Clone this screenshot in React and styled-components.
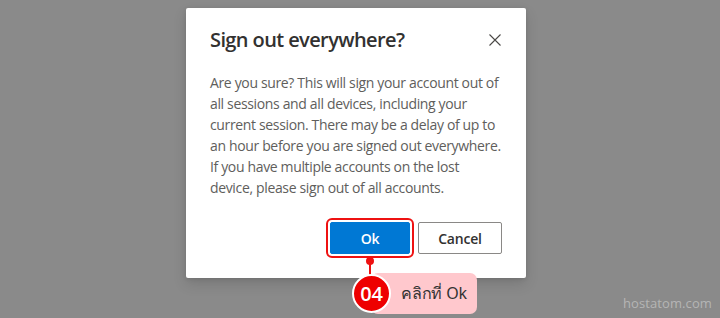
import React from 'react'
import styled, { createGlobalStyle } from "styled-components"

const GlobalStyle = createGlobalStyle`
    html, body {
        margin: 0;
        padding: 0;
        background: #8a8a8a;
    }
    * {
        box-sizing: border-box;
    }
`;

const Page = styled.div`
    position: relative;
    width: 720px;
    height: 318px;
    overflow: hidden;
    display: flex;
    justify-content: center;
    align-items: flex-start;
    padding-top: 8px;
    font-family: "Open Sans", "Noto Sans", sans-serif;
`;

const Dialog = styled.div`
    width: 340px;
    margin-right: 8px;
    background: #ffffff;
    border-radius: 2px;
    padding: 18px 24px 24px;
    box-shadow: 0 6px 14px rgba(0, 0, 0, 0.13), 0 1px 4px rgba(0, 0, 0, 0.1);
`;

const Header = styled.div`
    display: flex;
    align-items: center;
    justify-content: space-between;
`;

const Title = styled.h2`
    margin: 0;
    font-size: 20px;
    line-height: 28px;
    font-weight: 600;
    color: #323130;
    letter-spacing: -0.6px;
`;

const CloseButton = styled.button`
    display: flex;
    align-items: center;
    justify-content: center;
    width: 24px;
    height: 24px;
    margin-right: -5px;
    padding: 0;
    border: none;
    background: none;
    color: #4a4846;
`;

const Body = styled.p`
    margin: 18px 0 0;
    font-size: 14px;
    line-height: 21px;
    color: #605e5c;
    letter-spacing: -0.35px;
`;

const Footer = styled.div`
    display: flex;
    justify-content: flex-end;
    gap: 8px;
    margin-top: 24px;
`;

const Button = styled.button`
    position: relative;
    height: 32px;
    width: ${p => p.$width}px;
    border-radius: 2px;
    font-family: inherit;
    font-size: 14px;
    font-weight: 600;
    letter-spacing: -0.2px;
    border: 1px solid ${p => (p.$primary ? "#0078d4" : "#8a8886")};
    background: ${p => (p.$primary ? "#0078d4" : "#ffffff")};
    color: ${p => (p.$primary ? "#ffffff" : "#323130")};
`;

const Ring = styled.span`
    position: absolute;
    inset: -5px;
    border: 2px solid #ee1111;
    border-radius: 6px;
    pointer-events: none;
`;

const Dot = styled.span`
    position: absolute;
    left: 50%;
    bottom: -9px;
    width: 8px;
    height: 8px;
    margin-left: -4px;
    border-radius: 50%;
    background: #ee1111;
`;

const Stem = styled.span`
    position: absolute;
    left: 50%;
    top: 36px;
    width: 2px;
    height: 17px;
    margin-left: -1px;
    background: #ee1111;
`;

const Callout = styled.div`
    position: absolute;
    left: 21px;
    top: 50px;
    display: flex;
    align-items: center;
    z-index: 2;
`;

const Badge = styled.span`
    position: relative;
    z-index: 1;
    display: flex;
    align-items: center;
    justify-content: center;
    width: 39px;
    height: 39px;
    border-radius: 50%;
    background: #ee0000;
    border: 2px solid #ffffff;
    color: #ffffff;
    font-family: "Open Sans", sans-serif;
    font-size: 20px;
    font-weight: 600;
    letter-spacing: -0.3px;
`;

const Label = styled.span`
    display: flex;
    align-items: center;
    height: 41px;
    margin-left: -20px;
    padding: 0 10px 0 30px;
    border-radius: 7px;
    background: #ffc8cd;
    color: #333333;
    font-family: "Noto Sans", "DejaVu Sans", sans-serif;
    font-size: 16px;
    font-weight: 400;
    white-space: nowrap;
`;

const Watermark = styled.div`
    position: absolute;
    right: 8px;
    bottom: 6px;
    font-family: "Open Sans", sans-serif;
    font-size: 13px;
    letter-spacing: 0.1px;
    color: rgba(255, 255, 255, 0.38);
`;

function App() {
    return (
        <Page>
            <GlobalStyle />
            <Dialog>
                <Header>
                    <Title>Sign out everywhere?</Title>
                    <CloseButton aria-label="Close">
                        <svg width="14" height="14" viewBox="0 0 14 14">
                            <path d="M1.5 1.5 L12.5 12.5 M12.5 1.5 L1.5 12.5" stroke="currentColor" strokeWidth="1.1" fill="none" />
                        </svg>
                    </CloseButton>
                </Header>
                <Body>
                    Are you sure? This will sign your account out of all sessions and all devices,
                    including your current session. There may be a delay of up to an hour before
                    you are signed out everywhere. If you have multiple accounts on the lost device,
                    please sign out of all accounts.
                </Body>
                <Footer>
                    <Button $primary $width={80}>
                        Ok
                        <Ring>
                            <Dot />
                        </Ring>
                        <Stem />
                        <Callout>
                            <Badge>04</Badge>
                            <Label>คลิกที่ Ok</Label>
                        </Callout>
                    </Button>
                    <Button $width={84}>Cancel</Button>
                </Footer>
            </Dialog>
            <Watermark>hostatom.com</Watermark>
        </Page>
    )
}

export default App
